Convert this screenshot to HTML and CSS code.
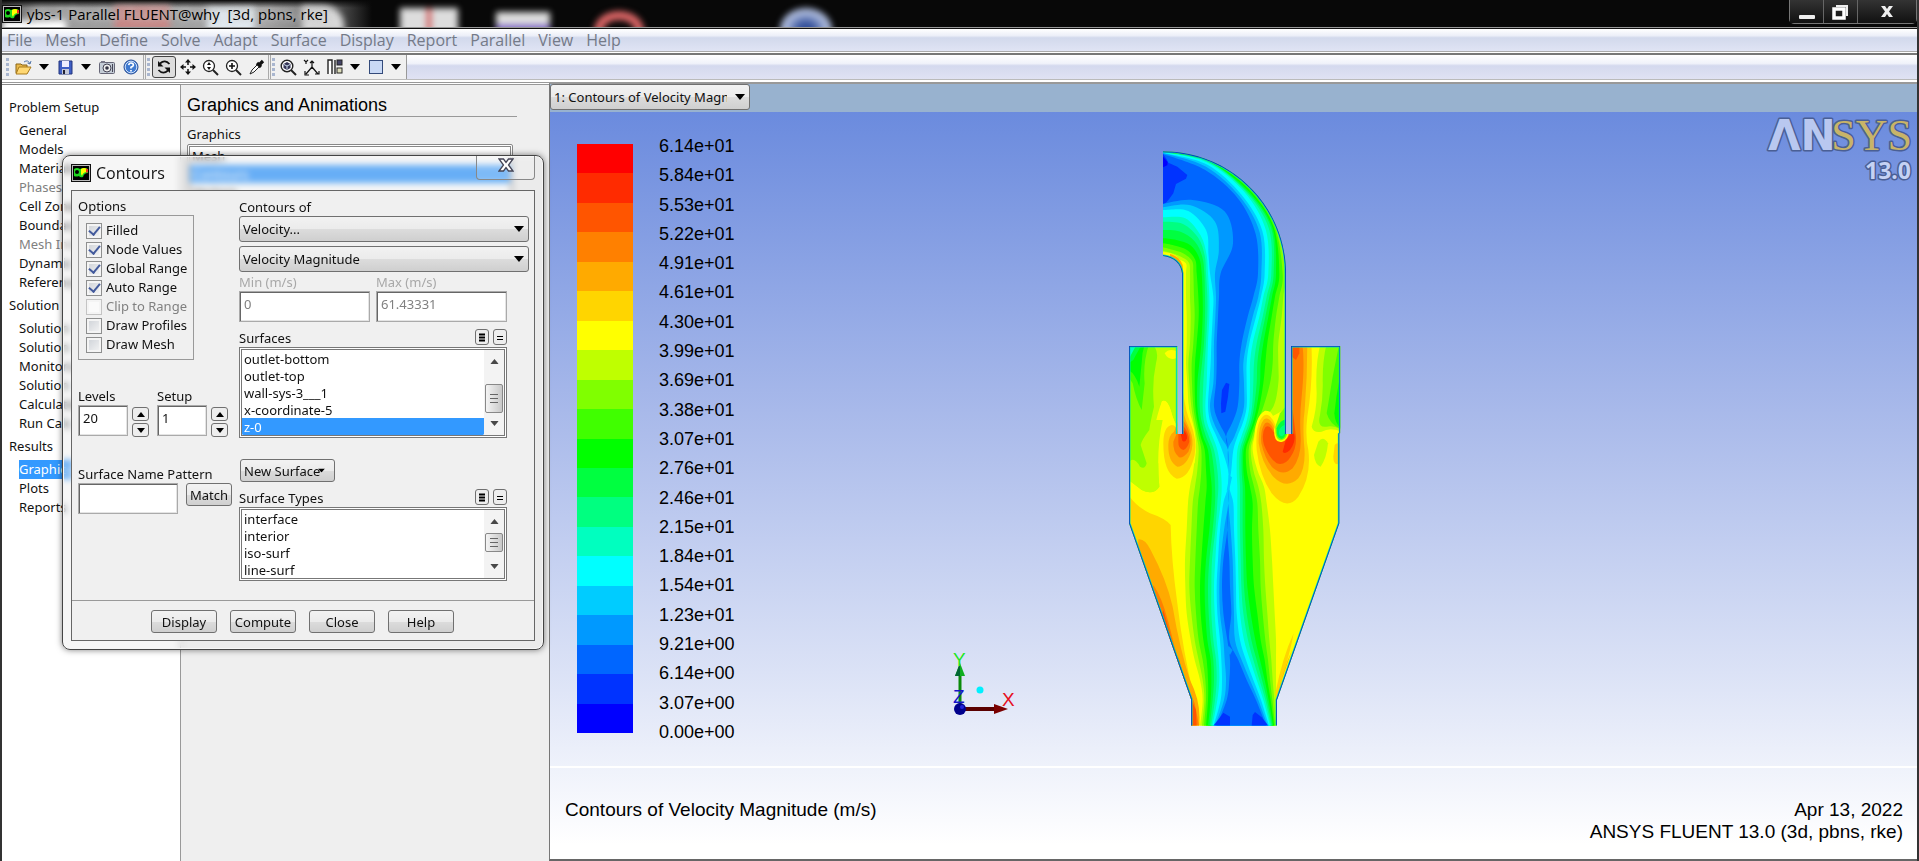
FILE: index.html
```html
<!DOCTYPE html>
<html lang="en">
<head>
<meta charset="utf-8">
<title>ybs-1 Parallel FLUENT@why [3d, pbns, rke]</title>
<link rel="stylesheet" href="styles.css">
</head>
<body>
<svg class="defs" width="0" height="0" aria-hidden="true">
  <symbol id="app" viewBox="0 0 20 18"><rect width="20" height="18" fill="#111"/><rect x="1.500" y="1.500" width="17" height="15" fill="#000" stroke="#bbb"/><path d="M3 5Q6 3 9 5Q13 3 17 5V9Q13 9 12 13Q9 14 8 12Q5 13 3 12Z" fill="#1fd81f"/><path d="M10 5Q13 3 16 5V8Q12 8 11 12L10 10Z" fill="#ff0"/><path d="M15 5h2v3l-2 1Z" fill="#e32"/><circle cx="6" cy="8" r="2" fill="#000"/></symbol>
  <symbol id="down" viewBox="0 0 10 6"><path d="M0 0H10L5 6Z" fill="#000"/></symbol>
  <symbol id="up" viewBox="0 0 10 6"><path d="M0 6H10L5 0Z" fill="#000"/></symbol>
</svg>

<header class="titlebar">
  <div class="desk" aria-hidden="true">
    <i class="blob b1"></i><i class="blob b2"></i><i class="blob b3"></i><i class="blob b4"></i><i class="blob b5"></i><i class="blob b6"></i><i class="blob b7"></i><i class="blob b8"></i>
  </div>
  <svg class="app-icon" width="20" height="18"><use href="#app"/></svg>
  <h1 class="title">ybs-1 Parallel FLUENT@why&nbsp; [3d, pbns, rke]</h1>
  <div class="win-buttons">
    <button type="button" aria-label="Minimize"><svg width="16" height="16" viewBox="0 0 16 16"><rect x="0" y="11" width="16" height="4" rx="1" fill="#eee"/></svg></button>
    <button type="button" aria-label="Restore"><svg width="17" height="16" viewBox="0 0 17 16"><path d="M4 2H15V12" fill="none" stroke="#eee" stroke-width="2"/><rect x="2" y="5" width="10" height="9" fill="none" stroke="#fff" stroke-width="3.500"/></svg></button>
    <button type="button" aria-label="Close" class="wide"><svg width="14" height="13" viewBox="0 0 14 13"><path d="M1 1H5L7 4L9 1H13L9 6.500L13 12H9L7 9L5 12H1L5 6.500Z" fill="#eee"/></svg></button>
  </div>
</header>

<nav class="menubar">
  <a href="#">File</a><a href="#">Mesh</a><a href="#">Define</a><a href="#">Solve</a><a href="#">Adapt</a><a href="#">Surface</a><a href="#">Display</a><a href="#">Report</a><a href="#">Parallel</a><a href="#">View</a><a href="#">Help</a>
</nav>

<div class="toolbar">
  <div class="tools">
    <i class="grip"></i>
    <button type="button" aria-label="Open"><svg width="17" height="16" viewBox="0 0 17 16"><path d="M1 5H6L7 6H12V14H1Z" fill="#e8b84a" stroke="#8a6414"/><path d="M4 8H16L12 15H1Z" fill="#ffd873" stroke="#a87a1c"/><path d="M9 3Q13 0 15 5M15 5L12.500 4M15 5L16 2" fill="none" stroke="#5577aa"/></svg></button>
    <button type="button" aria-label="Open menu"><svg width="10" height="6"><use href="#down"/></svg></button>
    <button type="button" aria-label="Save"><svg width="15" height="15" viewBox="0 0 15 15"><path d="M1 1H14V14H1Z" fill="#3f5fc4" stroke="#22357d"/><rect x="4" y="1" width="7" height="6" fill="#eef"/><rect x="4" y="9" width="7" height="5" fill="#c5c9d8"/><rect x="5" y="10" width="2" height="4" fill="#223"/></svg></button>
    <button type="button" aria-label="Save menu"><svg width="10" height="6"><use href="#down"/></svg></button>
    <button type="button" aria-label="Snapshot"><svg width="16" height="14" viewBox="0 0 16 14"><rect x=".5" y="2.500" width="15" height="11" rx="1" fill="#c4ccd6" stroke="#667"/><rect x="2" y="1" width="4" height="2" fill="#778"/><circle cx="8" cy="8" r="4" fill="#eee" stroke="#445"/><circle cx="8" cy="8" r="1.800" fill="#334"/><path d="M13.500 4V12" stroke="#445"/></svg></button>
    <button type="button" aria-label="Help"><svg width="16" height="16" viewBox="0 0 16 16"><circle cx="8" cy="8" r="7" fill="#3f7ad0" stroke="#2a4f95"/><circle cx="8" cy="8" r="5.800" fill="none" stroke="#cfe0fa"/><path d="M5.700 6.200Q6 4 8 4Q10.500 4 10.300 6.200Q10 7.500 8 8.300V9.600M8 11V12.600" fill="none" stroke="#fff" stroke-width="1.700"/></svg></button>
    <i class="sep"></i><i class="grip"></i>
    <button type="button" aria-label="Rotate" class="pressed"><svg width="16" height="16" viewBox="0 0 16 16"><path d="M13.500 5Q9 0 4 4.500M2.500 11Q7 16 12 11.500" fill="none" stroke="#111" stroke-width="1.800"/><path d="M2 2V7.500H7.500ZM14 14V8.500H8.500Z" fill="#111"/></svg></button>
    <button type="button" aria-label="Pan"><svg width="16" height="16" viewBox="0 0 16 16"><path d="M8 2V6M8 10V14M2 8H6M10 8H14" stroke="#111" stroke-width="1.500"/><path d="M8 0L11 3.500H5ZM8 16L11 12.500H5ZM0 8L3.500 5V11ZM16 8L12.500 5V11Z" fill="#111"/></svg></button>
    <button type="button" aria-label="Zoom in or out"><svg width="17" height="17" viewBox="0 0 17 17"><circle cx="7" cy="7" r="5.500" fill="#fff" stroke="#222" stroke-width="1.300"/><path d="M11 11L16 16" stroke="#222" stroke-width="2"/><path d="M7 3L9 6H5ZM7 11L9 8H5Z" fill="#111"/></svg></button>
    <button type="button" aria-label="Zoom to area"><svg width="17" height="17" viewBox="0 0 17 17"><circle cx="7" cy="7" r="5.500" fill="#fff" stroke="#222" stroke-width="1.300"/><path d="M11 11L16 16" stroke="#222" stroke-width="2"/><path d="M7 4V10M4 7H10" stroke="#111" stroke-width="1.600"/></svg></button>
    <button type="button" aria-label="Probe"><svg width="16" height="16" viewBox="0 0 16 16"><path d="M1 15L3 11L9 5L11 7L5 13Z" fill="#fff" stroke="#222"/><path d="M8 4L12 8M10 6L14 2" stroke="#111" stroke-width="3.200"/></svg></button>
    <i class="sep"></i><i class="grip"></i>
    <button type="button" aria-label="Fit to window"><svg width="17" height="17" viewBox="0 0 17 17"><circle cx="7" cy="7" r="5.800" fill="#fff" stroke="#222" stroke-width="1.400"/><path d="M11 11L16 16" stroke="#222" stroke-width="2"/><path d="M7 3L10.500 5V9L7 11L3.500 9V5Z" fill="#335"/><path d="M7 7V10.500M7 7L4 5.500M7 7L10 5.500" stroke="#cde"/></svg></button>
    <button type="button" aria-label="Axes"><svg width="17" height="17" viewBox="0 0 17 17"><path d="M9 8V2M9 8L3 15M9 8L15 15M1 1L3 3L5 1M3 3V5M12 15H16V12M2 12V16H6M7 4L9 2L11 4" fill="none" stroke="#111" stroke-width="1.200"/></svg></button>
    <button type="button" aria-label="Arrange"><svg width="16" height="16" viewBox="0 0 16 16"><path d="M1 15V1H5V15M8 15V1" fill="#fff" stroke="#222" stroke-width="1.400"/><rect x="10" y="1" width="5" height="5" fill="#446" stroke="#222"/><rect x="10" y="9" width="5" height="5" fill="#ddb" stroke="#222"/></svg></button>
    <button type="button" aria-label="Arrange menu"><svg width="10" height="6"><use href="#down"/></svg></button>
    <button type="button" aria-label="Window colour"><svg width="14" height="14" viewBox="0 0 14 14"><rect x=".5" y=".5" width="13" height="13" fill="#c9d9f5" stroke="#334a7a"/></svg></button>
    <button type="button" aria-label="Window menu"><svg width="10" height="6"><use href="#down"/></svg></button>
  </div>
</div>

<main class="workspace">
  <nav class="tree">
    <h2>Problem Setup</h2>
    <a href="#">General</a><a href="#">Models</a><a href="#">Materials</a><a href="#" class="off">Phases</a><a href="#">Cell Zones</a><a href="#">Boundary</a><a href="#" class="off">Mesh Inter</a><a href="#">Dynamic</a><a href="#">Reference</a>
    <h2>Solution</h2>
    <a href="#">Solution</a><a href="#">Solution</a><a href="#">Monitors</a><a href="#">Solution</a><a href="#">Calculation</a><a href="#">Run Calc</a>
    <h2>Results</h2>
    <a href="#" class="on">Graphics</a><a href="#">Plots</a><a href="#">Reports</a>
  </nav>

  <section class="task">
    <h2>Graphics and Animations</h2>
    <label for="graphics">Graphics</label>
    <select id="graphics" size="5"><option>Mesh</option><option selected>Contours</option><option>Vectors</option></select>
  </section>

  <section class="view">
    <div class="tabs">
      <span class="drop tab"><select aria-label="Graphics window"><option>1: Contours of Velocity Magnitude</option></select><svg width="10" height="6"><use href="#down"/></svg></span>
    </div>
    <div class="canvas">
      <div class="plot">
        <div class="scale" id="scale"></div>
        <ol class="ticks" id="ticks"></ol>
        <svg class="triad" width="72" height="76" viewBox="-4 -8 72 76">
          <path d="M8 55V20" stroke="#0a8a0a" stroke-width="3"/><path d="M8 11L13 24H3Z" fill="#0fae1f"/><path d="M8 11V24H3Z" fill="#063"/>
          <path d="M8 57H42" stroke="#5a0000" stroke-width="4"/><path d="M42 52L56 57L42 62Z" fill="#7a0000"/>
          <circle cx="8" cy="57" r="6" fill="#00008c"/><circle cx="10" cy="55" r="2" fill="#2222dd"/><circle cx="28" cy="38" r="3.500" fill="#00f0ff"/>
          <text x="1" y="14" fill="#1ee61e">Y</text><text x="1" y="51" fill="#1414c8">Z</text><text x="50" y="54" fill="#e60f1e">X</text>
        </svg>
        <svg class="flow" id="flow" width="216" height="577" viewBox="81 60 648 1731" role="img" aria-label="Velocity magnitude contours"></svg>
        <svg class="logo" width="156" height="72" viewBox="0 0 156 72" aria-label="ANSYS 13.0">
          <text class="logo-sans" x="7" y="37">ΛN</text>
          <text class="logo-serif" x="151" y="37" text-anchor="end">SYS</text>
          <text class="logo-ver" x="150" y="66" text-anchor="end">13.0</text>
        </svg>
      </div>
      <footer class="caption">
        <p>Contours of Velocity Magnitude (m/s)</p>
        <p class="right">Apr 13, 2022<br>ANSYS FLUENT 13.0 (3d, pbns, rke)</p>
      </footer>
    </div>
  </section>
</main>

<section class="dialog" role="dialog" aria-labelledby="dlg-title">
  <header class="dlg-head">
    <svg width="20" height="18"><use href="#app"/></svg>
    <h2 id="dlg-title">Contours</h2>
    <button type="button" aria-label="Close dialog"><svg width="16" height="14" viewBox="0 0 16 14"><path d="M1 1H5.500L8 4.300L10.500 1H15L10.500 7L15 13H10.500L8 9.700L5.500 13H1L5.500 7Z" fill="#fff" stroke="#445" stroke-width="1.300"/></svg></button>
  </header>
  <form class="dlg-body">
    <div class="cols">
      <div class="left">
        <span class="lab">Options</span>
        <div class="group">
          <label><input type="checkbox" checked>Filled</label>
          <label><input type="checkbox" checked>Node Values</label>
          <label><input type="checkbox" checked>Global Range</label>
          <label><input type="checkbox" checked>Auto Range</label>
          <label class="off"><input type="checkbox" disabled>Clip to Range</label>
          <label><input type="checkbox">Draw Profiles</label>
          <label><input type="checkbox">Draw Mesh</label>
        </div>
        <div class="pair">
          <div><label class="lab" for="levels">Levels</label>
            <div class="spin"><input class="box" id="levels" value="20"><span><button type="button" aria-label="More levels"><svg width="8" height="5" viewBox="0 0 10 6"><use href="#up"/></svg></button><button type="button" aria-label="Fewer levels"><svg width="8" height="5" viewBox="0 0 10 6"><use href="#down"/></svg></button></span></div></div>
          <div><label class="lab" for="setup">Setup</label>
            <div class="spin"><input class="box" id="setup" value="1"><span><button type="button" aria-label="Next setup"><svg width="8" height="5" viewBox="0 0 10 6"><use href="#up"/></svg></button><button type="button" aria-label="Previous setup"><svg width="8" height="5" viewBox="0 0 10 6"><use href="#down"/></svg></button></span></div></div>
        </div>
        <label class="lab" for="pattern">Surface Name Pattern</label>
        <div class="match"><input class="box" id="pattern"><button type="button" class="btn">Match</button></div>
      </div>
      <div class="rightcol">
        <label class="lab" for="field">Contours of</label>
        <span class="drop"><select id="field"><option>Velocity...</option></select><svg width="10" height="6"><use href="#down"/></svg></span>
        <span class="drop second"><select aria-label="Variable"><option>Velocity Magnitude</option></select><svg width="10" height="6"><use href="#down"/></svg></span>
        <div class="narrow">
          <div class="range">
            <div><label class="lab dim" for="min">Min (m/s)</label><input class="box" id="min" value="0" disabled></div>
            <div><label class="lab dim" for="max">Max (m/s)</label><input class="box" id="max" value="61.43331" disabled></div>
          </div>
          <div class="listhead"><label class="lab" for="surfaces">Surfaces</label><button type="button" aria-label="Select all surfaces"><svg width="8" height="9"><path d="M1 1.500H7M1 4.500H7M1 7.500H7" stroke="#000" stroke-width="2"/></svg></button><button type="button" aria-label="Clear surfaces"><svg width="8" height="9"><path d="M1 3.500H7M1 6.500H7" stroke="#000"/></svg></button></div>
          <div class="list"><select id="surfaces" size="5"><option>outlet-bottom</option><option>outlet-top</option><option>wall-sys-3___1</option><option>x-coordinate-5</option><option selected>z-0</option></select>
            <div class="bar"><svg width="9" height="5" viewBox="0 0 10 6"><use href="#up"/></svg><i></i><svg width="9" height="5" viewBox="0 0 10 6"><use href="#down"/></svg></div></div>
          <button type="button" class="btn menu">New Surface<svg width="7" height="5" viewBox="0 0 10 6"><use href="#down"/></svg></button>
          <div class="listhead"><label class="lab" for="types">Surface Types</label><button type="button" aria-label="Select all types"><svg width="8" height="9"><path d="M1 1.500H7M1 4.500H7M1 7.500H7" stroke="#000" stroke-width="2"/></svg></button><button type="button" aria-label="Clear types"><svg width="8" height="9"><path d="M1 3.500H7M1 6.500H7" stroke="#000"/></svg></button></div>
          <div class="list"><select id="types" size="4"><option>interface</option><option>interior</option><option>iso-surf</option><option>line-surf</option></select>
            <div class="bar small"><svg width="9" height="5" viewBox="0 0 10 6"><use href="#up"/></svg><i></i><svg width="9" height="5" viewBox="0 0 10 6"><use href="#down"/></svg></div></div>
        </div>
      </div>
    </div>
    <div class="actions"><button type="button" class="btn">Display</button><button type="button" class="btn">Compute</button><button type="button" class="btn">Close</button><button type="button" class="btn">Help</button></div>
  </form>
</section>
<script src="contours.js"></script>
</body>
</html>
```

FILE: styles.css
```css
* { box-sizing: border-box; }
body { margin: 0; height: 100vh; display: flex; flex-direction: column; overflow: hidden; position: relative; background: #fff; border-left: 2px solid #333; border-right: 2px solid #333; font: 13px/19px "Noto Sans", Tahoma, sans-serif; color: #111; }
h1, h2, p, ol { margin: 0; padding: 0; font-weight: 400; }
button, input, select { font: inherit; color: inherit; margin: 0; }
a { color: inherit; text-decoration: none; }
.defs { position: absolute; }

.titlebar { position: relative; flex: none; height: 29px; display: flex; align-items: center; gap: 5px; background: #080808; border-bottom: 1px solid #111; box-shadow: inset 0 -1px #999; overflow: hidden; }
.desk { position: absolute; inset: 0 0 1px 0; overflow: hidden; background: linear-gradient(#080808 0, transparent 8px), linear-gradient(90deg, #555 0, #9b9b9b 40px, #a5a5a5 260px, #777 320px, #080808 370px); }
.blob { position: absolute; filter: blur(3px); }
.b1 { left: 0; top: 20px; width: 64px; height: 14px; background: #fff; }
.b2 { left: 112px; top: 6px; width: 56px; height: 24px; background: #c98684; }
.b3 { left: 205px; top: 8px; width: 48px; height: 24px; background: #e4ecf2; }
.b4 { left: 300px; top: 6px; width: 42px; height: 26px; background: #d8d8d8; border-radius: 0 20px 0 0; }
.b5 { left: 398px; top: 8px; width: 58px; height: 26px; background: linear-gradient(90deg, #ddd 44%, #c33 50%, #ddd 56%); }
.b6 { left: 494px; top: 12px; width: 54px; height: 24px; background: linear-gradient(#ddd 50%, #7a62c4 60%); }
.b7 { left: 592px; top: 11px; width: 50px; height: 40px; border: 9px solid #d66; border-radius: 50%; }
.b8 { left: 778px; top: 8px; width: 52px; height: 44px; border-radius: 50%; background: radial-gradient(#34509a 20%, #aab8da 55%); }
.app-icon, .title { position: relative; }
.title { font: 15px/24px "Open Sans", "Segoe UI", sans-serif; color: #000; text-shadow: 0 0 6px #ccc, 0 0 10px #bbb; }
.win-buttons { position: relative; margin-left: auto; align-self: flex-start; display: flex; height: 24px; border: 1px solid #777; border-top: 0; border-radius: 0 0 5px 5px; }
.win-buttons button { width: 34px; padding: 0; border: 0; border-right: 1px solid #666; background: linear-gradient(#333, #111); display: flex; align-items: center; justify-content: center; }
.win-buttons .wide { width: 58px; border-right: 0; }

.menubar { flex: none; height: 23px; padding-left: 5px; display: flex; gap: 13px; align-items: center; font: 16px/20px "Open Sans", "Segoe UI", sans-serif; color: #747a88; background: linear-gradient(#fff, #eceff8 30%, #d2d9ec 40%, #e0e4f4); border-bottom: 1px solid #aaa; }
.toolbar { flex: none; height: 27px; margin-top: 1px; border-top: 2px solid #777; background: linear-gradient(#fff, #f0f2fa 35%, #d4d9ee 45%, #e0e2f3); border-bottom: 1px solid #bbb; }
.tools { display: flex; width: max-content; height: 24px; align-items: center; background: #f0f0f0; border-right: 1px solid #999; padding: 0 1px 0 4px; }
.tools button { display: flex; align-items: center; justify-content: center; padding: 0; border: 0; background: none; height: 22px; min-width: 24px; }
.tools button:has(use) { min-width: 18px; }
.tools .pressed { border: 1px solid #444; border-radius: 3px; background: #ddd; }
.pressed ~ button:not(:has(use)) { min-width: 23px; }
.grip { width: 3px; height: 18px; margin-right: 2px; background: repeating-linear-gradient(#a9b6cf 0 3px, transparent 3px 5px); }
.sep { width: 3px; height: 24px; margin-right: 1px; border: 1px solid #aaa; border-width: 0 1px; }

.workspace { flex: 1; min-height: 0; display: flex; border-top: 1px solid #999; margin-top: 2px; }
.tree { flex: none; width: 179px; padding: 13px 0 0 7px; background: #fff; border-top: 1px solid #888; border-right: 1px solid #999; display: flex; flex-direction: column; align-items: flex-start; margin-top: 1px; }
.tree h2 { font-size: 13px; line-height: 19px; margin: 4px 0; }
.tree h2:first-child { margin-top: 0; }
.tree a { margin-left: 10px; line-height: 19px; white-space: nowrap; }
.off { color: #808080; }
.tree .on { background: #3399ff; color: #fff; }
.task { flex: none; width: 368px; background: #efefef; border-top: 1px solid #999; margin-top: 1px; padding-left: 6px; }
.task h2 { font: 18px/20px "Liberation Sans", Arial, sans-serif; color: #000; padding: 10px 0 1px 6px; margin: 0 32px 0 -6px; border-bottom: 1px solid #999; }
.task label { display: block; padding-top: 8px; }
.task select { display: block; width: 326px; height: 82px; border: 3px double #888; padding: 0; overflow: hidden; background: #fff; outline: 0; }
.task option { min-height: 17px; padding: 0 2px; line-height: 17px; }
option:checked { background: #3399ff linear-gradient(#3399ff, #3399ff); color: #fff; }

.view { flex: 1; min-width: 0; display: flex; flex-direction: column; border-left: 1px solid #777; border-bottom: 2px solid #666; border-top: 1px solid #999; }
.tabs { flex: none; height: 28px; background: #98b2cf; }
.drop { position: relative; display: block; }
.drop select { appearance: none; width: 100%; height: 26px; padding: 0 28px 0 3px; border: 1px solid #707070; border-radius: 3px; background: linear-gradient(#f2f2f2, #ebebeb 50%, #dcdcdc 51%, #cfcfcf); text-overflow: clip; }
.drop svg { position: absolute; right: 5px; top: 10px; pointer-events: none; }
.tab { width: 200px; }
.tab select { padding-right: 22px; }
.canvas { flex: 1; min-height: 0; display: flex; flex-direction: column; background: linear-gradient(#6b8bde, #a8b9ea 40%, #dbe2f6 75%, #fff 98%); font: 18px/22px "Liberation Sans", Arial, sans-serif; color: #000; }
.plot { position: relative; flex: 1; min-height: 0; display: flex; align-items: flex-start; padding: 32px 0 0 27px; border-bottom: 2px solid #fff; }
.scale { width: 56px; height: 589px; display: grid; grid-auto-rows: 1fr; }
.ticks { width: 90px; height: 608px; margin: -9px 0 0 26px; list-style: none; display: flex; flex-direction: column; justify-content: space-between; }
.triad { margin: 500px 0 0 199px; font: 19px "Liberation Sans", Arial, sans-serif; overflow: visible; }
.flow { margin: 6px 0 0 107px; }
.logo { margin: -31px 0 0 auto; overflow: visible; }
.logo text { paint-order: stroke; stroke: #4a5f95; stroke-width: 3px; stroke-linejoin: round; }
.logo-sans { font: 700 42px "DejaVu Sans", Verdana, sans-serif; fill: #b9c8f0; }
.logo-serif { font: 44px "Liberation Serif", serif; fill: #c8b468; }
.logo-ver { font: 700 23px/24px "Noto Sans", sans-serif; fill: #c5d2f4; }
.caption { flex: none; height: 91px; padding: 31px 14px 0 15px; display: flex; justify-content: space-between; font-size: 19px; }
.caption .right { text-align: right; }

.dialog { position: absolute; left: 60px; top: 155px; width: 482px; border: 1px solid #444; border-radius: 8px; padding: 0 8px 8px; background: rgba(226, 226, 226, .3); backdrop-filter: blur(3px); box-shadow: inset 0 0 0 1px #f6f6f6, 0 0 6px rgba(0, 0, 0, .5); }
.dlg-head { height: 34px; display: flex; align-items: center; gap: 5px; }
.dlg-head h2 { font: 16px/24px "Open Sans", "Segoe UI", sans-serif; color: #111; }
.dlg-head button { margin-left: auto; align-self: flex-start; width: 59px; height: 24px; padding: 0; border: 1px solid #888; border-top: 0; border-radius: 0 0 4px 4px; background: rgba(255, 255, 255, .15); }
.dlg-body { border: 1px solid #666; background: #f0f0f0; height: 451px; display: flex; flex-direction: column; justify-content: space-between; }
.cols { display: flex; padding: 7px 5px 0 6px; }
.left { width: 161px; flex: none; }
.rightcol { flex: 1; min-width: 0; }
.lab { display: block; height: 18px; line-height: 18px; white-space: nowrap; }
.left .lab { height: 17px; line-height: 16px; }
.dim { color: #a8a8a8; height: 19px; line-height: 20px; }
.group { width: 116px; height: 145px; border: 1px solid #999; padding: 5px 0 0 7px; margin-bottom: 28px; }
.group label { display: flex; align-items: center; gap: 4px; height: 19px; white-space: nowrap; }
.group input { appearance: none; flex: none; width: 16px; height: 16px; border: 1px solid #8e8f8f; box-shadow: inset 0 0 0 2px #f4f4f4; background: linear-gradient(135deg, #ccd0d6, #f6f6f6); display: grid; place-items: center; }
.group input:disabled { background: #fafafa; border-color: #c4c4c4; }
.group input:checked::before { content: ""; width: 5px; height: 9px; margin-bottom: 2px; border: solid #435a9c; border-width: 0 2px 2px 0; transform: rotate(40deg); }
.pair { display: flex; gap: 8px; margin-bottom: 29px; }
.spin { display: flex; gap: 4px; }
.spin span { display: flex; flex-direction: column; gap: 2px; padding-top: 2px; }
.spin span button, .listhead button { display: flex; align-items: center; justify-content: center; width: 17px; height: 14px; padding: 0; border: 1px solid #707070; border-radius: 3px; background: #eee; }
.box { display: block; width: 100%; height: 31px; padding: 0 4px 5px; border: 1px solid #aaa; box-shadow: inset 1px 1px #666, inset -1px -1px #e4e4e4; background: #fff; outline: 0; }
.box:disabled { color: #808080; }
.spin .box { width: 50px; }
.match { display: flex; gap: 8px; align-items: flex-start; }
.match .box { width: 100px; }
.btn { height: 23px; padding: 0; border: 1px solid #707070; border-radius: 3px; background: linear-gradient(#f2f2f2, #ebebeb 50%, #dcdcdc 51%, #cfcfcf); line-height: 20px; }
.match .btn { width: 46px; }
.second { margin-top: 4px; }
.narrow { width: 268px; }
.range { display: grid; grid-template-columns: 1fr 1fr; gap: 6px; margin-bottom: 7px; }
.listhead { display: flex; gap: 4px; align-items: flex-start; }
.listhead .lab { flex: 1; }
.listhead button { width: 14px; height: 16px; }
.list { display: flex; border: 3px double #777; background: #fff; }
.list select { flex: 1; min-width: 0; border: 0; padding: 0; background: #fff; overflow: hidden; outline: 0; scrollbar-width: none; }
.list option { min-height: 17px; height: 17px; padding: 0 2px; line-height: 17px; }
.bar { width: 20px; background: #f3f3f3; display: flex; flex-direction: column; align-items: center; justify-content: space-between; padding: 9px 0; }
.bar svg { opacity: .7; }
.bar i { width: 18px; height: 29px; margin-top: 12px; border: 1px solid #888; border-radius: 2px; background: repeating-linear-gradient(#666 0 1px, transparent 1px 4px) center / 8px 9px no-repeat, linear-gradient(90deg, #f4f4f4, #c8c8c8); }
.bar.small i { height: 19px; margin: 0 0 4px; }
.menu { display: flex; align-items: center; width: 95px; margin: 21px 0 7px 1px; padding-left: 3px; }
.menu svg { margin-left: -2px; }
.actions { height: 40px; border-top: 1px solid #999; display: flex; gap: 13px; justify-content: center; padding-top: 9px; padding-right: 1px; }
.actions .btn { width: 66px; }
```

FILE: contours.js
```js
const colors = ["#0000ff", "#0033ff", "#0066ff", "#0099ff", "#00ccff", "#00ffff", "#00ffbf", "#00ff80", "#00ff40", "#00ff00",
  "#40ff00", "#80ff00", "#bfff00", "#ffff00", "#ffd500", "#ffaa00", "#ff8000", "#ff5500", "#ff2b00", "#ff0000"];
const labels = ["6.14e+01", "5.84e+01", "5.53e+01", "5.22e+01", "4.91e+01", "4.61e+01", "4.30e+01", "3.99e+01", "3.69e+01", "3.38e+01", "3.07e+01",
  "2.76e+01", "2.46e+01", "2.15e+01", "1.84e+01", "1.54e+01", "1.23e+01", "9.21e+00", "6.14e+00", "3.07e+00", "0.00e+00"];

document.getElementById("scale").innerHTML = [...colors].reverse().map(c => `<i style="background:${c}"></i>`).join("");
document.getElementById("ticks").innerHTML = labels.map(t => `<li>${t}</li>`).join("");

// Stations across the jet: crossings of levels 12..2 on the inner side, then 2..12 on the outer side.
// In the elbow the first number is an angle and crossings are radii; below it is a height.
const elbow = [
  [0, [60, 68, 78, 90, 105, 130, 155, 168, 190, 198, 208], [358, 361, 362, 363, 364, 364, 365, 365, 366, 366, 367]],
  [22, [59, 66, 76, 90, 108, 135, 160, 178, 202, 220, 237], [335, 345, 352, 358, 361, 362, 363, 364, 365, 366, 367]],
  [45, [62, 72, 85, 100, 118, 135, 150, 160, 183, 220, 262], [318, 326, 333, 345, 349, 352, 356, 360, 363, 365, 367]],
  [67, [75, 84, 95, 105, 118, 128, 136, 142, 148, 182, 228], [302, 315, 324, 335, 345, 352, 356, 360, 363, 365, 367]]
];
const straight = [
  [430, [258, 270, 280, 290, 305, 313, 318, 324, 330, 345, 362], [474, 484, 494, 505, 514, 521, 528, 538, 548, 556, 558]],
  [500, [258, 270, 282, 295, 308, 315, 322, 328, 340, 348, 357], [460, 475, 483, 490, 500, 508, 516, 525, 538, 550, 558]],
  [560, [260, 272, 284, 296, 308, 315, 322, 328, 338, 346, 354], [443, 458, 468, 478, 488, 496, 505, 515, 528, 545, 556]],
  [640, [260, 270, 280, 290, 304, 312, 318, 324, 334, 342, 350], [425, 440, 448, 458, 470, 480, 490, 502, 520, 535, 558]],
  [700, [258, 265, 275, 285, 298, 306, 314, 322, 332, 342, 350], [418, 430, 440, 450, 462, 472, 482, 496, 518, 535, 558]],
  [760, [262, 268, 276, 284, 292, 300, 310, 320, 328, 340, 348], [418, 432, 440, 450, 460, 470, 480, 490, 510, 535, 558]],
  [830, [266, 274, 280, 286, 292, 299, 308, 316, 324, 330, 342], [413, 432, 440, 448, 456, 462, 470, 478, 490, 520, 558]],
  [880, [274, 282, 288, 293, 299, 306, 313, 322, 332, 342, 358], [396, 418, 428, 438, 446, 452, 458, 464, 470, 476, 480]],
  [920, [284, 290, 296, 302, 309, 318, 327, 338, 350, 362, 378], [378, 403, 412, 424, 432, 438, 444, 450, 456, 461, 464]],
  [960, [286, 296, 304, 314, 324, 333, 342, 352, 366, 384, 384], [384, 384, 400, 412, 420, 426, 431, 438, 446, 452, 458]],
  [1020, [280, 292, 304, 318, 330, 342, 352, 362, 384, 386, 386], [386, 386, 394, 410, 418, 425, 430, 440, 450, 460, 472]],
  [1070, [270, 285, 300, 320, 335, 345, 355, 365, 384, 386, 386], [386, 386, 388, 412, 420, 428, 435, 450, 462, 475, 492]],
  [1120, [264, 278, 294, 316, 334, 345, 352, 362, 370, 385, 385], [385, 385, 400, 412, 420, 428, 436, 458, 472, 484, 500]],
  [1200, [260, 274, 290, 310, 328, 338, 346, 352, 360, 372, 382], [382, 392, 402, 412, 420, 428, 436, 456, 475, 490, 510]],
  [1290, [255, 270, 286, 304, 318, 328, 336, 346, 354, 362, 370], [388, 398, 406, 414, 422, 430, 438, 458, 480, 492, 516]],
  [1370, [256, 268, 284, 300, 314, 324, 334, 342, 350, 358, 366], [390, 400, 408, 416, 424, 432, 442, 462, 482, 496, 520]],
  [1450, [260, 274, 288, 302, 316, 326, 334, 344, 352, 360, 370], [394, 402, 410, 420, 430, 440, 452, 472, 488, 502, 524]],
  [1530, [272, 284, 296, 310, 322, 332, 340, 350, 360, 370, 382], [388, 405, 420, 432, 444, 454, 466, 482, 496, 508, 528]],
  [1590, [284, 296, 308, 320, 332, 340, 348, 356, 364, 374, 390], [415, 425, 438, 450, 460, 470, 480, 494, 504, 514, 528]],
  [1650, [300, 308, 316, 324, 334, 342, 350, 358, 366, 378, 388], [440, 450, 460, 470, 478, 486, 494, 502, 510, 518, 528]],
  [1710, [308, 313, 318, 324, 332, 338, 345, 352, 362, 372, 380], [468, 475, 483, 490, 496, 501, 506, 512, 517, 523, 529]],
  [1790, [300, 306, 312, 318, 324, 329, 333, 337, 340, 344, 348], [500, 504, 508, 511, 514, 517, 520, 523, 526, 529, 531]]
];

function smooth(p) {
  let d = "";
  for (let i = 0; i < p.length - 1; i++) {
    const a = p[Math.max(i - 1, 0)], b = p[i], c = p[i + 1], e = p[Math.min(i + 2, p.length - 1)];
    d += `C${b[0] + (c[0] - a[0]) / 6} ${b[1] + (c[1] - a[1]) / 6} ${c[0] - (e[0] - b[0]) / 6} ${c[1] - (e[1] - b[1]) / 6} ${c[0]} ${c[1]}`;
  }
  return d;
}
function side(which, k) {
  const bend = elbow.map(s => {
    const t = s[0] * Math.PI / 180, r = s[which][k];
    return [189 + r * Math.sin(t), 430 - r * Math.cos(t)];
  });
  return bend.concat(straight.map(s => [s[which][k], s[0]]));
}
let jet = "";
for (let level = 12; level >= 2; level--) {
  const inner = side(1, 12 - level), outer = side(2, level - 2).reverse();
  jet += `<path fill="${colors[level]}" d="M${inner[0]}${smooth(inner)}L${outer[0]}${smooth(outer)}Z"/>`;
}
const shape = (level, d) => `<path fill="${colors[level]}" d="${d}"/>`;

const domain = "M189 64C395 64 558 230 558 430V912H573V648H721V910H718V1180L531 1710V1787H273V1707L87 1180V648H232V912H246V430Q240 385 189 378Z";
const leftChamber = [
  shape(12, "M85 640H234V890Q222 880 212 840Q200 805 186 814Q172 850 160 910Q180 870 190 880Q168 960 178 1070Q160 1098 125 1080Q100 1060 85 1050Z"),
  shape(13, "M186 814Q200 805 212 840Q222 880 234 890V1000H155Q158 920 175 855Z"),
  shape(12, "M85 870H188Q168 960 178 1070Q160 1098 125 1080Q100 1060 85 1050Z"),
  shape(11, "M85 640H150Q180 655 168 700Q155 760 162 830Q150 880 148 900Q125 930 122 945L140 1000Q135 1020 120 1010Q100 975 85 1000Z"),
  shape(10, "M85 640H148Q128 700 134 760L125 840Q108 810 98 760L85 740Z"),
  shape(9, "M85 640H135Q125 670 125 700L118 770Q105 730 85 720Z"),
  shape(8, "M85 640H128Q110 670 100 690L85 700Z"),
  shape(6, "M85 640H112L98 665L85 690Z"),
  shape(13, "M194 670Q205 655 228 662V685Q205 692 194 670Z"),
  shape(14, "M85 1095Q110 1130 150 1150Q195 1165 212 1185Q214 1290 232 1420Q250 1570 280 1690L300 1787H85Z"),
  shape(15, "M115 1228Q135 1225 152 1260Q200 1350 218 1430Q240 1560 270 1650Q305 1720 297 1787H85Z"),
  shape(16, "M160 1365Q185 1400 205 1475L225 1555L255 1650L284 1720L297 1787H85Z"),
  shape(17, "M190 1440L235 1600V1580L265 1690L288 1740L290 1787H85Z")
];
const leftHot = [
  shape(13, "M248 700Q262 830 276 870Q295 930 284 1000H235V700Z"),
  shape(14, "M248 780Q258 850 272 880Q292 930 284 975Q268 1045 230 1046Q190 1030 190 940Q190 890 215 885Q225 885 234 900Z"),
  shape(15, "M248 840Q255 870 270 900Q282 930 275 960Q260 1010 232 1010Q204 995 205 945Q206 915 222 905Z"),
  shape(16, "M248 870Q262 885 270 915Q275 945 265 965Q250 985 237 982Q218 965 220 935L232 905Z"),
  shape(17, "M248 885Q268 910 268 935Q262 955 250 960Q234 955 235 935V905Z"),
  shape(18, "M250 900Q262 910 261 925Q256 940 247 932L242 912Z")
];
const rightChamber = [
  shape(13, "M570 640H725V1000H570Z"),
  shape(12, "M655 640H725V905Q690 890 665 905Q640 910 635 890Q650 840 650 790Q645 700 662 640Z"),
  shape(11, "M680 640H725V900Q700 885 680 890Q650 895 660 855Q670 800 668 750Q668 690 680 640Z"),
  shape(10, "M715 655L725 650V898Q690 885 680 850Q690 790 698 740Z"),
  shape(9, "M718 750H725V895Q705 885 703 850Q708 800 718 750Z"),
  shape(12, "M655 935Q670 915 684 940Q680 985 662 1010Q645 1005 642 975Z"),
  shape(14, "M704 945Q712 935 720 945V1000Q700 1010 700 980Z")
];
const rightHot = [
  shape(13, "M463 950Q460 860 495 842Q520 840 525 880L560 930V1000H470Z"),
  shape(14, "M525 882Q508 845 490 858Q465 880 470 960Q480 1040 515 1090Q560 1145 595 1100Q635 1040 625 960Q615 920 622 860Q640 750 634 640H560V920Z"),
  shape(15, "M524 892Q508 858 492 868Q474 890 476 940Q485 1000 520 1040Q560 1080 595 1045Q620 1010 612 940Q608 880 614 840Q622 740 622 640H560V920Z"),
  shape(16, "M522 900Q508 870 495 880Q480 900 484 940Q495 990 520 1015Q550 1040 578 1015Q605 980 602 920Q598 860 605 800Q615 700 607 640H560V920Z"),
  shape(17, "M520 905Q508 882 496 892Q483 910 492 945Q508 985 530 1000Q555 1008 572 980Q590 955 588 920Q583 880 578 840H560V925Z"),
  shape(18, "M556 935Q572 905 583 912Q588 935 570 960Q555 975 548 965Z"),
  shape(17, "M575 650H598V670L588 690L575 680Z"),
  shape(13, "M522 900Q522 940 545 936Q566 930 568 900L556 850L530 870Z"),
  shape(11, "M526 890Q524 932 545 931Q562 928 563 900L556 830L540 850Z"),
  shape(8, "M530 895Q528 927 545 927Q558 924 560 900V868Q540 870 530 895Z"),
  shape(7, "M538 900Q534 918 546 919Q556 916 558 885Q545 885 538 900Z")
];
const extras = [
  shape(12, "M558 530Q545 580 540 640Q535 720 552 790H560V530Z"),
  shape(13, "M189 366Q232 368 246 400Q256 420 252 470L246 520V430Q240 385 189 378Z"),
  shape(15, "M210 372Q238 378 248 405L250 430H244Q238 395 210 380Z"),
  shape(1, "M189 72L200 88L205 98L232 110L262 135L258 146L228 162L220 190L208 206L198 218L189 221Z"),
  shape(0, "M189 80L203 96L202 106L189 112Z"),
  shape(1, "M378 758L388 762L384 800L376 845L364 850L363 820L366 780Z"),
  shape(1, "M340 1787L358 1765L370 1748L390 1760V1787Z"),
  shape(1, "M455 1787L458 1755L465 1746L485 1762L505 1787Z"),
  shape(3, "M378 1560L386 1548L398 1560L390 1575Z"),
  shape(4, "M386 1035L396 1042L388 1078L380 1082L384 1060Z"),
  shape(14, "M581 1510Q572 1560 548 1640L531 1710L526 1690Q548 1580 581 1510Z"),
  shape(15, "M578 1555L545 1650L531 1710Q545 1630 578 1555Z")
];
document.getElementById("flow").innerHTML =
  `<defs><clipPath id="body"><path d="${domain}"/></clipPath><clipPath id="pipe"><path d="M180 50H558V915H725V1790H80V915H246V430L180 420Z"/></clipPath></defs>
  <g clip-path="url(#body)"><rect x="80" y="60" width="650" height="1731" fill="${colors[13]}"/>
  ${leftChamber.join("")}${rightChamber.join("")}<g clip-path="url(#pipe)">${jet}</g>${extras.join("")}${leftHot.join("")}${rightHot.join("")}
  <path d="M189 64C395 64 558 230 558 430V912M573 912V648H721V910M718 910V1180L531 1710V1787M273 1787V1707L87 1180V648H232V912M246 912V430Q240 385 189 378" fill="none" stroke="#00e0b0" stroke-width="9"/>
  <path d="M189 64C395 64 558 230 558 430V912M573 912V648H721V910M718 910V1180L531 1710V1787M273 1787V1707L87 1180V648H232M246 912V430Q240 385 189 378" fill="none" stroke="#0a3fc0" stroke-width="5"/></g>`;
```
